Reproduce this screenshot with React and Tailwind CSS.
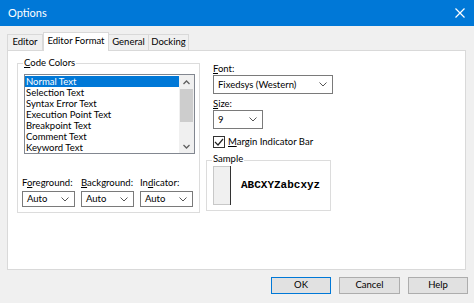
import React from "react";

const font = { fontFamily: 'Lato, "Noto Sans", sans-serif' };

const Chevron = () => (
  <svg width="8" height="5" viewBox="0 0 8 5" className="shrink-0">
    <path d="M0.5 0.5 L4 4 L7.5 0.5" fill="none" stroke="#555" strokeWidth="1" />
  </svg>
);

const Combo = ({ value, className }) => (
  <div className={`flex items-center justify-between border border-[#7a7a7a] bg-white pl-[4px] pr-[5px] ${className}`}>
    <span className="whitespace-nowrap text-[9.5px] leading-none text-black">{value}</span>
    <Chevron />
  </div>
);

const U = ({ children }) => <span className="underline underline-offset-[1px]">{children}</span>;

const items = [
  "Normal Text",
  "Selection Text",
  "Syntax Error Text",
  "Execution Point Text",
  "Breakpoint Text",
  "Comment Text",
  "Keyword Text",
];

export default function App() {
  return (
    <div className="flex h-[303px] w-[474px] flex-col overflow-hidden bg-[#f0f0f0] text-black" style={font}>
      {/* title bar */}
      <div className="flex h-[26px] items-center justify-between bg-[#0078d7] pl-[8px] pr-[9px]">
        <span className="text-[11px] text-white">Options</span>
        <svg width="10" height="10" viewBox="0 0 10 10">
          <path d="M0.5 0.5 L9.5 9.5 M9.5 0.5 L0.5 9.5" stroke="#fff" strokeWidth="1.2" />
        </svg>
      </div>

      <div className="flex flex-1 flex-col pl-[7px] pr-[8px]">
        {/* tabs */}
        <div className="mt-[6px] flex h-[18px] items-end whitespace-nowrap text-[9.5px]">
          <div className="flex h-[16px] w-[36px] items-center justify-center border border-b-0 border-[#d9d9d9]">Editor</div>
          <div className="relative z-10 -mb-px flex h-[19px] w-[66px] items-center justify-center border border-b-0 border-[#d9d9d9] bg-white pb-[1px]">Editor Format</div>
          <div className="flex h-[16px] w-[40px] items-center justify-center border border-b-0 border-l-0 border-[#d9d9d9]">General</div>
          <div className="flex h-[16px] w-[40px] items-center justify-center border border-b-0 border-l-0 border-[#d9d9d9]">Docking</div>
        </div>

        {/* panel */}
        <div className="flex h-[220px] gap-[6px] whitespace-nowrap border border-[#d9d9d9] bg-white pl-[9px] pt-[12px] text-[9.5px]">
          {/* code colors group */}
          <div className="relative flex h-[150px] w-[183px] flex-col border border-[#dcdcdc] px-[4px] pt-[10px]">
            <span className="absolute left-[5px] top-[-8px] bg-white px-[1px]">
              <U>C</U>ode Colors
            </span>
            <div className="ml-[2px] flex h-[80px] w-[171px] border border-[#828790]">
              <div className="flex flex-1 flex-col pt-[1px]">
                {items.map((t, i) => (
                  <div
                    key={t}
                    className={`flex h-[11px] items-center pl-[1px] leading-none ${i === 0 ? "bg-[#0078d7] text-white" : ""}`}
                  >
                    {t}
                  </div>
                ))}
              </div>
              <div className="flex w-[15px] flex-col items-center bg-[#f0f0f0]">
                <div className="flex h-[14px] items-center">
                  <svg width="7" height="5" viewBox="0 0 7 5">
                    <path d="M0.5 4 L3.5 1 L6.5 4" fill="none" stroke="#606060" strokeWidth="1.3" />
                  </svg>
                </div>
                <div className="h-[33px] w-[13px] bg-[#cdcdcd]" />
                <div className="flex-1" />
                <div className="flex h-[14px] items-center">
                  <svg width="7" height="5" viewBox="0 0 7 5">
                    <path d="M0.5 1 L3.5 4 L6.5 1" fill="none" stroke="#606060" strokeWidth="1.3" />
                  </svg>
                </div>
              </div>
            </div>
            <div className="mt-[23px] flex gap-[6px]">
              <div className="flex w-[53px] flex-col gap-[2px]">
                <span className="leading-[12px]">F<U>o</U>reground:</span>
                <Combo value="Auto" className="h-[16px]" />
              </div>
              <div className="flex w-[53px] flex-col gap-[2px]">
                <span className="leading-[12px]"><U>B</U>ackground:</span>
                <Combo value="Auto" className="h-[16px]" />
              </div>
              <div className="flex w-[53px] flex-col gap-[2px]">
                <span className="leading-[12px]">In<U>d</U>icator:</span>
                <Combo value="Auto" className="h-[16px]" />
              </div>
            </div>
          </div>

          {/* right column */}
          <div className="flex flex-col">
            <div className="flex flex-col pl-[7px]">
              <span className="leading-[12px]"><U>F</U>ont:</span>
              <Combo value="Fixedsys (Western)" className="h-[19px] w-[120px]" />
              <span className="mt-[4px] leading-[12px]"><U>S</U>ize:</span>
              <Combo value="9" className="h-[19px] w-[50px]" />
              <div className="mt-[7px] flex items-center gap-[3px]">
                <div className="flex h-[12px] w-[12px] items-center justify-center border border-[#333]">
                  <svg width="10" height="8" viewBox="0 0 10 8">
                    <path d="M1 4 L4 7 L9 1" fill="none" stroke="#222" strokeWidth="1.2" />
                  </svg>
                </div>
                <span className="leading-none"><U>M</U>argin Indicator Bar</span>
              </div>
            </div>
            <div className="relative mt-[12px] h-[51px] w-[125px] border border-[#dcdcdc] pl-[6px] pt-[5px]">
              <span className="absolute left-[5px] top-[-9px] bg-white px-[1px]">Sample</span>
              <div className="flex h-[39px] w-[112px]">
                <div className="w-[17px] border border-r-0 border-[#c8c8c8] bg-[#f0f0f0]" />
                <div className="w-[1px] bg-[#333]" />
                <div className="flex flex-1 items-center pl-[10px]">
                  <span className="text-[11px] font-bold" style={{ fontFamily: '"Liberation Mono", monospace' }}>
                    ABCXYZabcxyz
                  </span>
                </div>
              </div>
            </div>
          </div>
        </div>

        {/* buttons */}
        <div className="mr-[-2px] mt-[7px] flex justify-end gap-[8px] text-[9.5px]">
          <div className="flex h-[17px] w-[60px] items-center justify-center border border-[#0078d7] bg-[#e1e1e1]">OK</div>
          <div className="flex h-[17px] w-[61px] items-center justify-center border border-[#adadad] bg-[#e1e1e1]">Cancel</div>
          <div className="flex h-[17px] w-[60px] items-center justify-center border border-[#adadad] bg-[#e1e1e1]">Help</div>
        </div>
      </div>
    </div>
  );
}
